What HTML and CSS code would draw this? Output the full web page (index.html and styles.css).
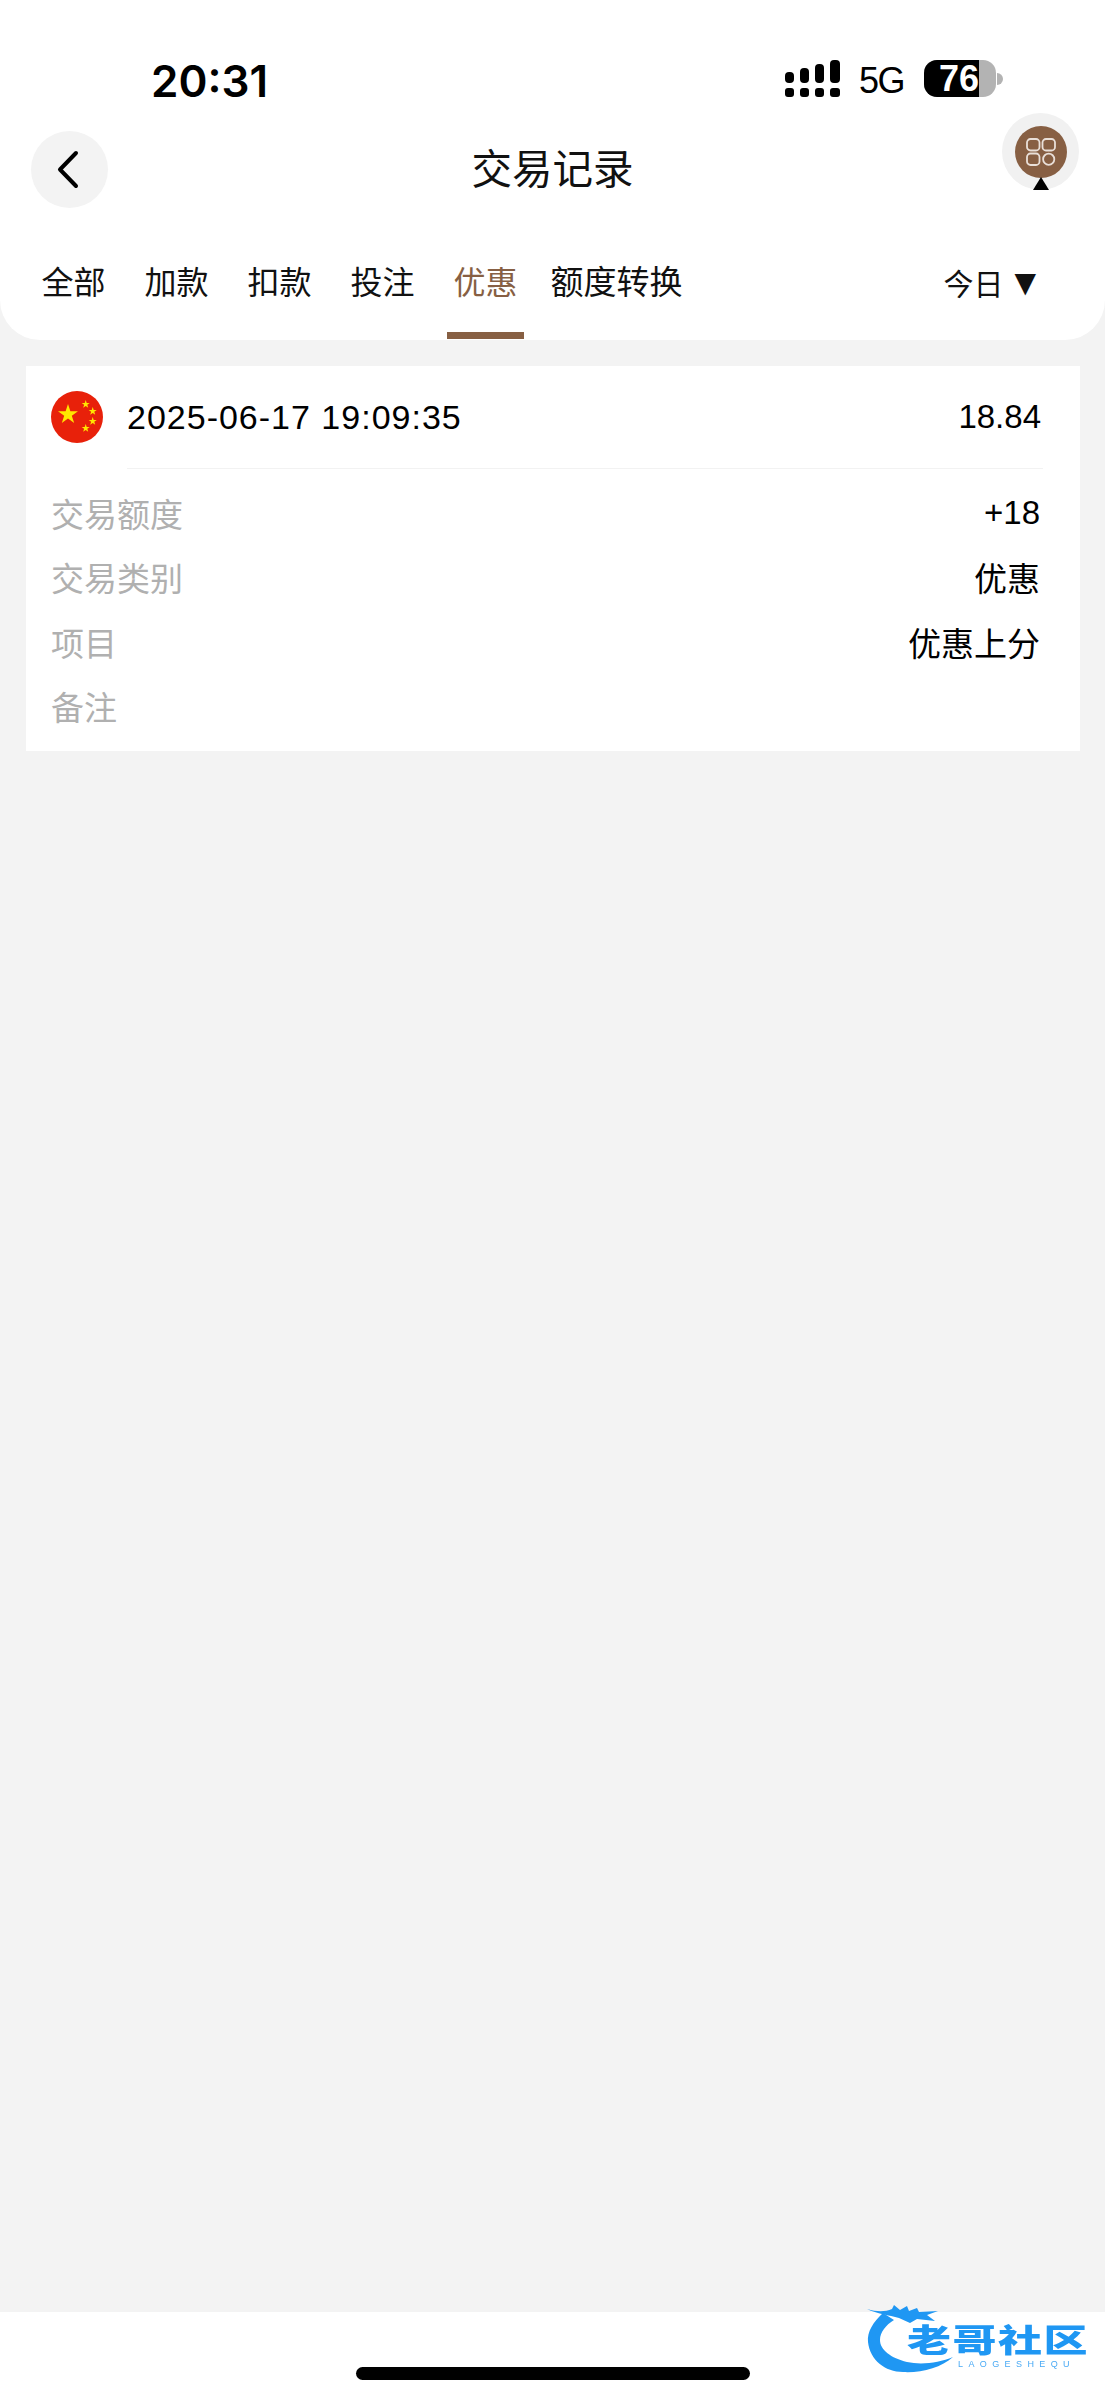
FILE: index.html
```html
<!DOCTYPE html>
<html lang="zh-CN">
<head>
    <meta charset="UTF-8">
    <meta name="viewport" content="width=device-width, initial-scale=1.0">
    <title>交易记录</title>
    <link rel="stylesheet" href="styles.css">
</head>
<body>
    <header class="top-panel">
        <!-- Status bar -->
        <div class="status-bar">
            <span class="clock">20:31</span>
            <div class="status-icons">
                <svg class="signal" width="55" height="37" viewBox="0 0 55 37" fill="#000">
                    <rect x="0" y="12" width="9" height="11" rx="4"/>
                    <rect x="15" y="8" width="9" height="15" rx="4"/>
                    <rect x="30" y="4" width="9" height="19" rx="4"/>
                    <rect x="45" y="0" width="10" height="23" rx="4"/>
                    <rect x="0" y="28" width="9" height="9" rx="3"/>
                    <rect x="15" y="28" width="9" height="9" rx="3"/>
                    <rect x="30" y="28" width="9" height="9" rx="3"/>
                    <rect x="45" y="28" width="10" height="9" rx="3"/>
                </svg>
                <span class="network">5G</span>
                <div class="battery">
                    <div class="battery-body">
                        <div class="battery-fill" style="width: 76%"></div>
                        <span class="battery-level">76</span>
                    </div>
                    <div class="battery-tip"></div>
                </div>
            </div>
        </div>

        <!-- Nav bar -->
        <div class="nav-bar">
            <button class="back-btn" type="button">
                <svg width="24" height="39" viewBox="0 0 24 39" fill="none" stroke="#000" stroke-width="4" stroke-linecap="round" stroke-linejoin="round">
                    <path d="M20 3 L4 19.5 L20 36"/>
                </svg>
            </button>
            <h1 class="page-title">交易记录</h1>
            <div class="menu-btn">
                <div class="menu-disc">
                    <svg width="30" height="28" viewBox="0 0 30 28" fill="none" stroke="#e9dfd8" stroke-width="1.8">
                        <rect x="1" y="1" width="12.5" height="11.5" rx="3.5"/>
                        <rect x="16.5" y="1" width="12.5" height="11.5" rx="3.5"/>
                        <rect x="1" y="15.5" width="12.5" height="11.5" rx="3.5"/>
                        <circle cx="22.7" cy="21.2" r="5.6"/>
                    </svg>
                </div>
                <div class="menu-arrow"></div>
            </div>
        </div>

        <!-- Tabs -->
        <nav class="tabs">
            <a class="tab">全部</a>
            <a class="tab">加款</a>
            <a class="tab">扣款</a>
            <a class="tab">投注</a>
            <a class="tab active">优惠</a>
            <a class="tab tab-wide">额度转换</a>
            <a class="date-filter">今日<span class="caret">▼</span></a>
        </nav>
    </header>

    <main class="content">
        <section class="record-card">
            <div class="record-head">
                <svg class="flag" width="52" height="52" viewBox="0 0 52 52">
                    <circle cx="26" cy="26" r="26" fill="#e8210a"/>
                    <polygon fill="#ffe600" points="17,13 19.4,20.2 27,20.2 20.8,24.7 23.2,32 17,27.5 10.8,32 13.2,24.7 7,20.2 14.6,20.2"/>
                    <polygon fill="#ffe600" points="34.7,9 35.7,12 38.7,12 36.3,13.8 37.2,16.8 34.7,15 32.2,16.8 33.1,13.8 30.7,12 33.7,12"/>
                    <polygon fill="#ffe600" points="41.7,16 42.7,19 45.7,19 43.3,20.8 44.2,23.8 41.7,22 39.2,23.8 40.1,20.8 37.7,19 40.7,19"/>
                    <polygon fill="#ffe600" points="41.7,26 42.7,29 45.7,29 43.3,30.8 44.2,33.8 41.7,32 39.2,33.8 40.1,30.8 37.7,29 40.7,29"/>
                    <polygon fill="#ffe600" points="34.7,33 35.7,36 38.7,36 36.3,37.8 37.2,40.8 34.7,39 32.2,40.8 33.1,37.8 30.7,36 33.7,36"/>
                </svg>
                <div class="record-summary">
                    <span class="record-time">2025-06-17 19:09:35</span>
                    <span class="record-balance">18.84</span>
                </div>
            </div>
            <div class="record-rows">
                <div class="record-row"><span class="row-label">交易额度</span><span class="row-value">+18</span></div>
                <div class="record-row"><span class="row-label">交易类别</span><span class="row-value">优惠</span></div>
                <div class="record-row"><span class="row-label">项目</span><span class="row-value">优惠上分</span></div>
                <div class="record-row"><span class="row-label">备注</span><span class="row-value"></span></div>
            </div>
        </section>
    </main>

    <footer class="bottom-bar">
        <div class="home-indicator"></div>
        <!-- Watermark over the bottom edge -->
        <div class="watermark">
            <svg class="watermark-dragon" width="100" height="76" viewBox="0 0 100 76" fill="#1f97f3">
                <path d="M16 13 C6 22 0 32 1 42 C3 60 18 72 36 72 C54 73 74 68 86 57 C72 63 54 65 40 62 C24 58 13 50 13 40 C13 32 19 25 27 20 Z"/>
                <path d="M0 9 C10 12 18 12 25 9 L27 5 L33 10 L40 6 L42 11 L50 8 L52 12 L71 11 L60 15 L68 21 L50 19 L43 23 L32 18 C22 15 10 14 0 9 Z"/>
            </svg>
            <span class="watermark-name">老哥社区</span>
            <span class="watermark-sub">LAOGESHEQU</span>
        </div>
    </footer>
</body>
</html>
```

FILE: styles.css
```css
/* General styles */
* {
    box-sizing: border-box;
}

body {
    margin: 0;
    min-height: 2400px;
    display: flex;
    flex-direction: column;
    background: #f3f3f3;
    color: #000;
    font-family: "Liberation Sans", "Noto Sans CJK SC", sans-serif;
}

/* Top white panel */
.top-panel {
    background: #ffffff;
    border-radius: 0 0 40px 40px;
    padding-bottom: 1px;
}

/* Status bar */
.status-bar {
    height: 131px;
    display: flex;
    justify-content: space-between;
    align-items: flex-start;
    padding: 56px 102px 0 151px;
}

.clock {
    font-family: Inter, "Liberation Sans", sans-serif;
    font-size: 44px;
    font-weight: 600;
    line-height: 50px;
}

.status-icons {
    display: flex;
    align-items: flex-start;
    margin-top: 4px;
}

.network {
    margin: 2px 0 0 19px;
    font-size: 36px;
    line-height: 37px;
    letter-spacing: -1.5px;
}

.battery {
    display: flex;
    align-items: center;
    margin-left: 20px;
}

.battery-body {
    position: relative;
    width: 72px;
    height: 37px;
    border-radius: 13px;
    background: #b3b3b3;
}

.battery-fill {
    height: 100%;
    border-radius: 13px 0 0 13px;
    background: #000;
}

.battery-level {
    position: absolute;
    top: 0;
    left: 15px;
    color: #fff;
    font-size: 36px;
    font-weight: 700;
    line-height: 37px;
}

.battery-tip {
    width: 6px;
    height: 12px;
    margin-left: 1px;
    border-radius: 0 6px 6px 0;
    background: #b3b3b3;
}

/* Nav bar */
.nav-bar {
    position: relative;
    height: 77px;
    display: flex;
    align-items: center;
    justify-content: center;
}

.back-btn {
    position: absolute;
    left: 31px;
    top: 0;
    width: 77px;
    height: 77px;
    display: flex;
    align-items: center;
    justify-content: center;
    padding: 0 4px 0 0;
    border: none;
    border-radius: 50%;
    background: #f3f3f3;
}

.page-title {
    margin: 0;
    font-size: 40.5px;
    font-weight: 400;
    line-height: 56px;
    color: #111;
}

.menu-btn {
    position: absolute;
    left: 1002px;
    top: -18px;
    width: 77px;
    height: 77px;
    border-radius: 50%;
    background: #f1f1f1;
}

.menu-disc {
    width: 52px;
    height: 52px;
    margin: 13px auto 0;
    display: flex;
    align-items: center;
    justify-content: center;
    border-radius: 50%;
    background: #875f43;
}

.menu-arrow {
    width: 0;
    height: 0;
    margin: -1px auto 0;
    border-left: 8px solid transparent;
    border-right: 8px solid transparent;
    border-bottom: 13px solid #000;
}

/* Tabs */
.tabs {
    display: flex;
    align-items: flex-start;
    padding: 56px 69px 0 35px;
}

.tab {
    padding: 0 6.5px 30px;
    margin-right: 26px;
    border-bottom: 7px solid transparent;
    font-size: 32px;
    line-height: 38px;
    color: #111;
}

.tab.active {
    color: #875f43;
    border-bottom-color: #875f43;
}

.tab-wide {
    margin-left: -6px;
    margin-right: 0;
    font-size: 33px;
}

.date-filter {
    margin-left: auto;
    font-size: 30px;
    line-height: 38px;
    color: #111;
}

.caret {
    margin-left: 11px;
    font-family: "DejaVu Sans", sans-serif;
    font-size: 28px;
    vertical-align: 3px;
}

/* Record card */
.content {
    flex: 1;
    padding: 26px 25px 0 26px;
}

.record-card {
    background: #ffffff;
    padding: 25px 40px 13px 25px;
}

.record-head {
    display: flex;
    align-items: flex-start;
    gap: 24px;
}

.flag {
    flex-shrink: 0;
}

.record-summary {
    flex: 1;
    height: 78px;
    margin-right: -3px;
    padding-right: 3px;
    display: flex;
    justify-content: space-between;
    border-bottom: 1px solid #f2f2f2;
    font-size: 34px;
    line-height: 52px;
}

.record-time {
    letter-spacing: 1px;
}

.record-balance {
    margin-right: -1px;
    font-size: 33px;
}

.record-rows {
    padding-top: 12px;
}

.record-row {
    height: 64.3px;
    display: flex;
    align-items: center;
    justify-content: space-between;
    font-size: 33px;
}

.row-label {
    color: #b0b0b0;
}

/* Bottom bar */
.bottom-bar {
    position: relative;
    height: 88px;
    background: #ffffff;
}

.home-indicator {
    position: absolute;
    left: 356px;
    top: 55px;
    width: 394px;
    height: 13px;
    border-radius: 7px;
    background: #000;
}

/* Watermark */
.watermark {
    position: absolute;
    left: 867px;
    top: -12px;
    width: 225px;
    height: 76px;
    filter: blur(0.7px);
}

.watermark-dragon {
    position: absolute;
    left: 0;
    top: 0;
}

.watermark-name {
    position: absolute;
    left: 40px;
    top: 25px;
    font-size: 44px;
    font-weight: 900;
    line-height: 44px;
    letter-spacing: 1.5px;
    white-space: nowrap;
    color: #1f97f3;
    transform: scaleY(0.72);
    transform-origin: left top;
}

.watermark-sub {
    position: absolute;
    left: 91px;
    top: 60px;
    font-size: 9px;
    line-height: 9px;
    letter-spacing: 5.4px;
    white-space: nowrap;
    color: #4aaaf5;
}
```
